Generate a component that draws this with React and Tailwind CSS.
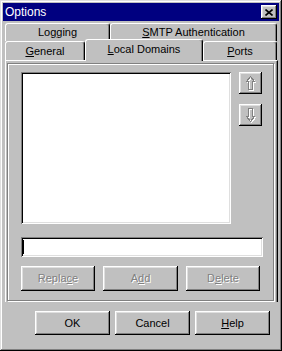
import { useState } from "react";

const raised =
  "shadow-[inset_-1px_-1px_#000,inset_1px_1px_#fff,inset_-2px_-2px_#808080,inset_2px_2px_#dfdfdf]";
const sunken =
  "shadow-[inset_1px_1px_#808080,inset_-1px_-1px_#fff,inset_2px_2px_#000,inset_-2px_-2px_#dfdfdf]";
const disabledText = "text-[#808080] [text-shadow:1px_1px_0_#fff]";

const Tab = ({ className, children }) => (
  <div
    className={`flex items-center justify-center bg-[#c0c0c0] border-t border-l border-r border-white border-r-black rounded-t-[3px] shadow-[inset_-1px_0_#808080] ${className}`}
  >
    {children}
  </div>
);

const Arrow = ({ down }) => (
  <svg width="11" height="16" viewBox="0 0 11 16" className={down ? "rotate-180" : ""}>
    <g fill="none" strokeWidth="1" shapeRendering="crispEdges">
      <path
        d="M5.5 1.5 L9.5 6.5 L7.5 6.5 L7.5 14.5 L3.5 14.5 L3.5 6.5 L1.5 6.5 Z"
        stroke="#fff"
        transform={down ? "translate(-1 -1)" : "translate(1 1)"}
      />
      <path
        d="M5.5 1.5 L9.5 6.5 L7.5 6.5 L7.5 14.5 L3.5 14.5 L3.5 6.5 L1.5 6.5 Z"
        stroke="#808080"
      />
    </g>
  </svg>
);

const Button = ({ className = "", disabled, children }) => (
  <button
    className={`flex items-center justify-center bg-[#c0c0c0] ${raised} ${
      disabled ? disabledText : "text-black"
    } ${className}`}
  >
    {children}
  </button>
);

export default function App() {
  const [domain, setDomain] = useState("");

  return (
    <div className="w-[282px] h-[351px] bg-[#c0c0c0] p-[3px] flex flex-col text-[11px] text-black font-['Liberation_Sans',Arial,sans-serif] shadow-[inset_-1px_-1px_#000,inset_1px_1px_#dfdfdf,inset_-2px_-2px_#808080,inset_2px_2px_#fff]">
      {/* title bar */}
      <div className="h-[18px] bg-[#000080] flex items-center justify-between pl-[2px] pr-[2px]">
        <span className="text-white text-[12px]">Options</span>
        <button className={`w-[16px] h-[14px] bg-[#c0c0c0] flex items-center justify-center ${raised}`}>
          <svg width="8" height="7" viewBox="0 0 8 7">
            <path d="M0.5 0.5 L7.5 6.5 M7.5 0.5 L0.5 6.5" stroke="#000" strokeWidth="1.6" />
          </svg>
        </button>
      </div>

      {/* tabs */}
      <div className="mt-[2px] pl-[2px] flex flex-col">
        <div className="flex h-[18px]">
          <Tab className="w-[105px]">
            <span>
              Lo<u>g</u>ging
            </span>
          </Tab>
          <Tab className="w-[167px]">
            <span>
              <u>S</u>MTP Authentication
            </span>
          </Tab>
        </div>
        <div className="flex h-[19px]">
          <Tab className="w-[80px] pt-[1px]">
            <span>
              <u>G</u>eneral
            </span>
          </Tab>
          <Tab className="w-[118px] h-[22px] -mt-[2px] relative z-10 pb-[3px]">
            <span>
              <u>L</u>ocal Domains
            </span>
          </Tab>
          <Tab className="w-[74px] pt-[1px]">
            <span>
              <u>P</u>orts
            </span>
          </Tab>
        </div>
      </div>

      {/* tab panel */}
      <div className="ml-[2px] w-[273px] border-l border-t border-r border-white border-r-black shadow-[inset_-1px_0_#808080] pl-[1px] pt-[2px] pr-[3px] pb-[1px]">
        <div className="border border-[#808080] shadow-[inset_1px_1px_#fff,1px_1px_#fff] pl-[13px] pt-[8px] pb-[9px]">
          <div className="flex">
            <div className={`w-[210px] h-[152px] bg-white ${sunken}`} />
            <div className="ml-[8px] flex flex-col gap-[10px]">
              <Button className="w-[23px] h-[22px]">
                <Arrow />
              </Button>
              <Button className="w-[23px] h-[22px]">
                <Arrow down />
              </Button>
            </div>
          </div>

          <div className={`mt-[13px] w-[242px] h-[20px] bg-white relative ${sunken}`}>
            <input
              value={domain}
              onChange={(e) => setDomain(e.target.value)}
              className="w-full h-full bg-transparent outline-none px-[3px] text-[11px]"
            />
            <div className="absolute left-[2px] top-[3px] w-px h-[14px] bg-black" />
          </div>

          <div className="mt-[9px] flex gap-[8px]">
            <Button disabled className="w-[74px] h-[25px]">
              <span>
                Repla<u>c</u>e
              </span>
            </Button>
            <Button disabled className="w-[75px] h-[25px]">
              <span>
                A<u>d</u>d
              </span>
            </Button>
            <Button disabled className="w-[74px] h-[25px]">
              <span>
                D<u>e</u>lete
              </span>
            </Button>
          </div>
        </div>
      </div>

      {/* footer */}
      <div className="mt-[9px] pl-[32px] flex gap-[5px]">
        <Button className="w-[75px] h-[24px]">OK</Button>
        <Button className="w-[75px] h-[24px]">Cancel</Button>
        <Button className="w-[75px] h-[24px]">
          <span>
            <u>H</u>elp
          </span>
        </Button>
      </div>
    </div>
  );
}
